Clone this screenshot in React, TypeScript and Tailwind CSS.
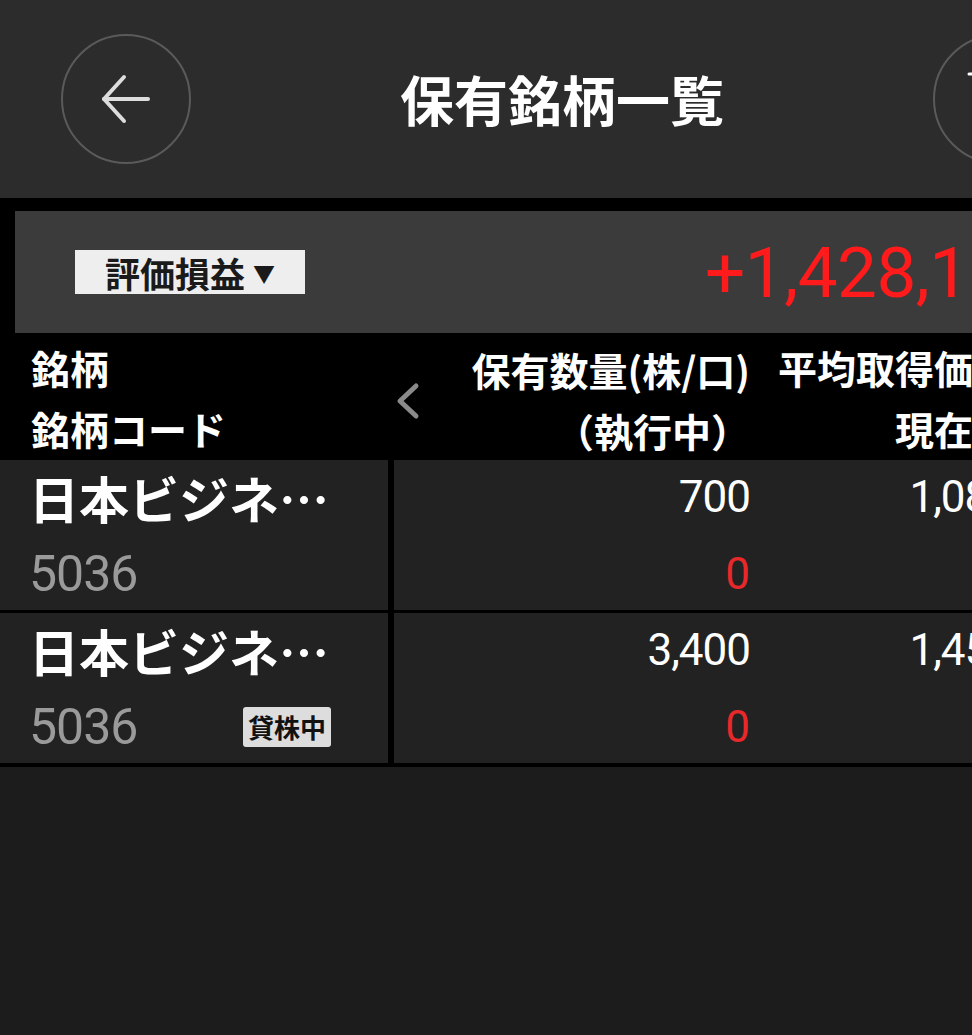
import React from "react";

const jp = { fontFamily: '"Noto Sans CJK JP", "Noto Sans", sans-serif' };
const num = { fontFamily: 'Roboto, "Noto Sans CJK JP", sans-serif' };

function Row({ tag, qty, avg }: { tag?: boolean; qty: string; avg: string }) {
  return (
    <div className="flex h-[150px] bg-[#222222]">
      <div className="w-[388px] flex flex-col pl-[29px] pr-[57px]">
        <div className="h-[74px] flex items-center text-[50px] font-bold text-white leading-none" style={jp}>
          日本ビジネ…
        </div>
        <div className="h-[76px] pt-[4px] flex items-center justify-between">
          <span className="text-[50px] text-[#9a9a9a] leading-none tracking-[-1px]" style={num}>5036</span>
          {tag && (
            <span className="bg-[#dddddd] rounded-[3px] px-[5px] h-[40px] flex items-center text-[26px] font-bold text-[#111] leading-none" style={jp}>
              貸株中
            </span>
          )}
        </div>
      </div>
      <div className="w-[6px] bg-black" />
      <div className="w-[356px] flex flex-col items-end">
        <div className="h-[74px] flex items-center text-[44px] text-white leading-none tracking-[-1px]" style={num}>{qty}</div>
        <div className="h-[76px] pt-[4px] flex items-center text-[44px] text-[#e8282a] leading-none" style={num}>0</div>
      </div>
      <div className="w-[262px] flex flex-col items-end">
        <div className="h-[74px] flex items-center text-[44px] text-white leading-none tracking-[-1px]" style={num}>{avg}</div>
        <div className="h-[76px]" />
      </div>
      <div className="flex-1" />
    </div>
  );
}

export default function App() {
  return (
    <div className="w-[972px] h-[1035px] overflow-hidden bg-[#1c1c1c]">
      <div className="w-[1124px]">
        {/* header */}
        <div className="h-[198px] bg-[#2c2c2c] flex items-center justify-between px-[61px]">
          <div className="w-[130px] h-[130px] rounded-full border-2 border-[#5a5a5a] flex items-center justify-center">
            <svg width="52" height="50" viewBox="0 0 52 50" fill="none" stroke="#dddddd" strokeWidth="4" strokeLinecap="round" strokeLinejoin="round">
              <path d="M48 25 H4" />
              <path d="M24 3 L4 25 L24 47" />
            </svg>
          </div>
          <div className="text-[54px] font-bold text-white leading-none" style={jp}>保有銘柄一覧</div>
          <div className="w-[130px] h-[130px] rounded-full border-2 border-[#5a5a5a] relative">
            <svg className="absolute left-[32px] top-[32px]" width="60" height="60" viewBox="0 0 60 60" fill="none" stroke="#ffffff" strokeWidth="3" strokeLinecap="round">
              <path d="M2 6 H8" />
            </svg>
          </div>
        </div>

        {/* summary */}
        <div className="bg-black pt-[13px] px-[15px]">
          <div className="h-[122px] bg-[#3b3b3b] flex items-center pl-[60px]">
            <div className="w-[230px] h-[44px] bg-[#eeeeee] flex items-center justify-center gap-[8px] text-[35px] font-bold text-[#1a1a1a] leading-none" style={jp}>
              <span>評価損益</span>
              <span className="text-[22px]">▼</span>
            </div>
            <div className="ml-[400px] text-[71px] font-normal text-[#ff1b1b] leading-none tracking-[-0.5px]" style={num}>+1,428,125</div>
          </div>
        </div>

        {/* table header */}
        <div className="h-[127px] bg-black flex text-white font-bold text-[39px] leading-none" style={jp}>
          <div className="w-[394px] flex flex-col pl-[31px]">
            <div className="h-[68px] flex items-center">銘柄</div>
            <div className="h-[54px] flex items-center">銘柄コード</div>
          </div>
          <div className="w-[356px] flex items-center">
            <svg className="ml-[1px] mt-[8px]" width="26" height="38" viewBox="0 0 26 38" fill="none" stroke="#8a8a8a" strokeWidth="5" strokeLinecap="round" strokeLinejoin="round">
              <path d="M21 4 L5 19 L21 34" />
            </svg>
            <div className="ml-auto flex flex-col items-end">
              <div className="h-[68px] flex items-center">保有数量(株/口)</div>
              <div className="h-[54px] flex items-center">（執行中）</div>
            </div>
          </div>
          <div className="w-[262px] flex flex-col items-end">
            <div className="h-[68px] flex items-center">平均取得価額</div>
            <div className="h-[54px] flex items-center">現在値</div>
          </div>
        </div>

        <Row qty="700" avg="1,085" />
        <div className="h-[3px] bg-black" />
        <Row tag qty="3,400" avg="1,459" />
        <div className="h-[4px] bg-black" />
      </div>
    </div>
  );
}
